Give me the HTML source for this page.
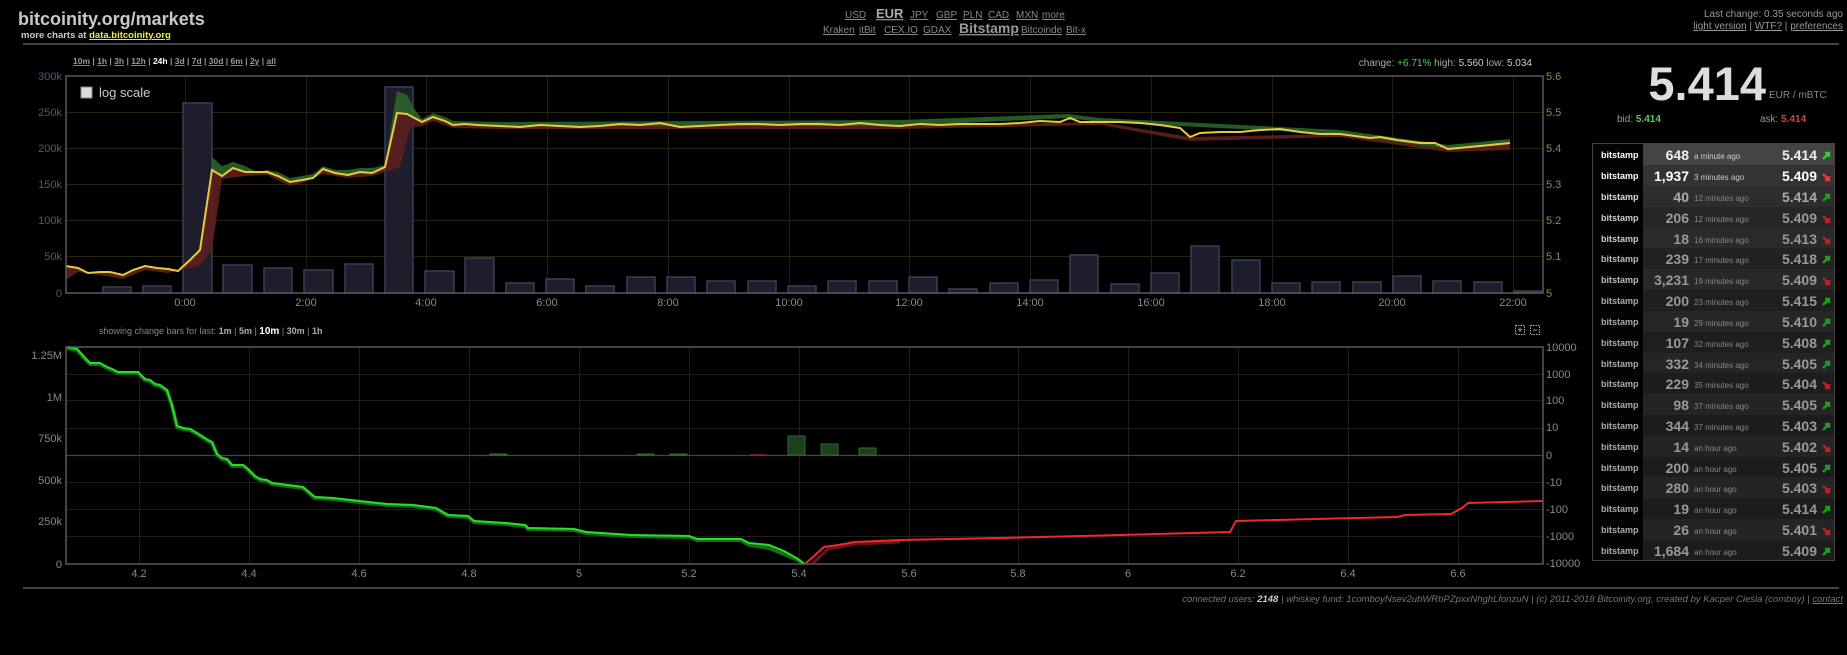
<!DOCTYPE html>
<html><head><meta charset="utf-8">
<style>
html,body{margin:0;padding:0;background:#000;width:1847px;height:655px;overflow:hidden;font-family:"Liberation Sans",Arial,sans-serif;}
svg{position:absolute;left:0;top:0}
a{color:#888}
.t{position:absolute;white-space:nowrap}
</style></head><body>
<svg width="1847" height="655" viewBox="0 0 1847 655" font-family="Liberation Sans, Arial, sans-serif">
<!-- header -->
<text x="18" y="25" font-size="18" font-weight="bold" fill="#c8c8c8">bitcoinity.org/markets</text>
<text x="21" y="38" font-size="9.5" font-weight="bold" fill="#ccc">more charts at <tspan fill="#ee4" text-decoration="underline">data.bitcoinity.org</tspan></text>
<g font-size="10" fill="#888" text-decoration="underline">
<text x="845" y="18">USD</text><text x="876" y="18" font-size="13" font-weight="bold" text-decoration="none" fill="#aaa">EUR</text>
<text x="910" y="18">JPY</text><text x="936" y="18">GBP</text><text x="963" y="18">PLN</text><text x="988" y="18">CAD</text><text x="1016" y="18">MXN</text><text x="1042" y="18">more</text>
<text x="823" y="33">Kraken</text><text x="859" y="33">itBit</text><text x="884" y="33">CEX.IO</text><text x="923" y="33">GDAX</text>
<text x="959" y="33" font-size="14" font-weight="bold" text-decoration="none" fill="#999">Bitstamp</text>
<text x="1021" y="33">Bitcoinde</text><text x="1066" y="33">Bit-x</text>
</g>
<text x="1843" y="17" font-size="10" fill="#999" text-anchor="end">Last change: 0.35 seconds ago</text>
<text x="1843" y="29" font-size="10" fill="#999" text-anchor="end"><tspan text-decoration="underline">light version</tspan> | <tspan text-decoration="underline">WTF?</tspan> | <tspan text-decoration="underline">preferences</tspan></text>
<rect x="23" y="43" width="1816" height="2" fill="#444"/>
<!-- timeframe -->
<text x="73" y="64" font-size="8.5" font-weight="bold" fill="#999"><tspan text-decoration="underline">10m</tspan> | <tspan text-decoration="underline">1h</tspan> | <tspan text-decoration="underline">3h</tspan> | <tspan text-decoration="underline">12h</tspan> | <tspan fill="#fff">24h</tspan> | <tspan text-decoration="underline">3d</tspan> | <tspan text-decoration="underline">7d</tspan> | <tspan text-decoration="underline">30d</tspan> | <tspan text-decoration="underline">6m</tspan> | <tspan text-decoration="underline">2y</tspan> | <tspan text-decoration="underline">all</tspan></text>
<text x="1532" y="66" font-size="10" fill="#aaa" text-anchor="end">change: <tspan fill="#5c5">+6.71%</tspan>      high: <tspan fill="#ccc">5.560</tspan>      low: <tspan fill="#ccc">5.034</tspan></text>

<!-- top chart grid -->
<g stroke="#26260e" stroke-width="1">
<line x1="66" y1="112.5" x2="1543" y2="112.5"/><line x1="66" y1="148.5" x2="1543" y2="148.5"/><line x1="66" y1="184.5" x2="1543" y2="184.5"/><line x1="66" y1="220.5" x2="1543" y2="220.5"/><line x1="66" y1="256.5" x2="1543" y2="256.5"/>
</g>
<g stroke="#1e1e1e">
<line x1="185.5" y1="76" x2="185.5" y2="293"/><line x1="306.5" y1="76" x2="306.5" y2="293"/><line x1="426.5" y1="76" x2="426.5" y2="293"/><line x1="547.5" y1="76" x2="547.5" y2="293"/><line x1="668.5" y1="76" x2="668.5" y2="293"/><line x1="789.5" y1="76" x2="789.5" y2="293"/><line x1="909.5" y1="76" x2="909.5" y2="293"/><line x1="1030.5" y1="76" x2="1030.5" y2="293"/><line x1="1151.5" y1="76" x2="1151.5" y2="293"/><line x1="1272.5" y1="76" x2="1272.5" y2="293"/><line x1="1392.5" y1="76" x2="1392.5" y2="293"/><line x1="1513.5" y1="76" x2="1513.5" y2="293"/>
</g>
<!-- volume bars -->
<g fill="#1d1d2b" stroke="#3c3c58" stroke-width="1.5">
<rect x="103" y="287" width="28" height="6"/><rect x="143" y="286" width="28" height="7"/><rect x="183" y="103" width="29" height="190"/><rect x="223" y="265" width="29" height="28"/><rect x="264" y="268" width="28" height="25"/><rect x="304" y="270" width="29" height="23"/><rect x="345" y="264" width="28" height="29"/><rect x="385" y="87" width="28" height="206"/><rect x="425" y="271" width="29" height="22"/><rect x="465" y="258" width="29" height="35"/>
<rect x="506" y="283" width="28" height="10"/><rect x="546" y="279" width="28" height="14"/><rect x="586" y="286" width="28" height="7"/><rect x="627" y="277" width="28" height="16"/><rect x="667" y="277" width="28" height="16"/><rect x="707" y="281" width="28" height="12"/><rect x="748" y="281" width="28" height="12"/><rect x="788" y="286" width="28" height="7"/><rect x="828" y="281" width="28" height="12"/><rect x="869" y="281" width="28" height="12"/><rect x="909" y="277" width="28" height="16"/><rect x="949" y="289" width="28" height="4"/><rect x="990" y="283" width="28" height="10"/><rect x="1030" y="280" width="28" height="13"/><rect x="1070" y="255" width="28" height="38"/><rect x="1111" y="284" width="28" height="9"/><rect x="1151" y="273" width="28" height="20"/><rect x="1191" y="246" width="28" height="47"/><rect x="1232" y="260" width="28" height="33"/><rect x="1272" y="283" width="28" height="10"/><rect x="1312" y="282" width="28" height="11"/><rect x="1353" y="282" width="28" height="11"/><rect x="1393" y="276" width="28" height="17"/><rect x="1433" y="281" width="28" height="12"/><rect x="1474" y="282" width="28" height="11"/><rect x="1514" y="291" width="28" height="2"/>
</g>
<!-- bands -->
<polygon fill="#2c6a2c" opacity="0.85" points="212,157 222,166 233,162 245,166 257,172 267,170 278,172 290,178 302,176 313,174 323,166 335,170 348,170 360,168 372,168 385,165 397,91 407,95 415,110 422,119 433,113 445,117 453,121 500,122 700,121 900,120 1068,114 1100,118 1340,130 1448,145 1510,139 1510,143 1448,149 1340,134 1100,122 1068,118 900,126 700,126 500,126 453,125 445,121 433,117 422,122 407,114 397,113 385,167 372,173 360,172 348,175 335,173 323,169 313,178 302,180 290,182 278,176 267,172 257,172 245,172 233,168 222,176 212,170"/>
<polygon fill="#5e1f1f" opacity="0.9" points="66,266 78,268 88,273 100,272 110,272 123,275 133,270 145,266 157,268 168,269 178,271 190,260 200,250 212,170 222,176 233,168 245,172 257,172 267,172 278,176 290,182 302,180 313,178 323,169 335,173 348,175 360,172 372,173 385,167 397,113 407,114 422,122 433,117 445,121 453,125 500,126 700,126 900,126 1100,122 1190,137 1340,134 1448,149 1510,143 1510,150 1448,152 1340,137 1190,141 1100,125 900,129 700,129 500,129 453,128 433,121 422,126 410,128 400,167 385,172 372,176 348,178 323,174 302,183 290,186 267,175 245,176 222,179 212,250 200,265 190,268 168,273 145,270 123,279 100,275 78,272 66,280"/>
<polyline fill="none" stroke="#e6cc3c" stroke-width="2" points="66,266 78,268 88,273 100,272 110,272 123,275 133,270 145,266 157,268 168,269 178,271 190,260 200,250 212,170 222,176 233,168 245,172 257,172 267,172 278,176 290,182 302,180 313,178 323,169 335,173 348,175 360,172 372,173 385,167 397,113 407,114 422,122 433,117 445,121 453,125 465,124 477,125 500,126 520,127 540,125 560,126 580,127 600,126 620,124 640,125 660,123 680,127 700,126 720,125 740,124 760,124 780,125 800,124 820,124 840,125 860,123 880,125 900,126 920,124 940,125 960,124 980,124 1000,124 1020,123 1040,121 1060,122 1070,118 1080,122 1100,122 1120,122 1140,123 1160,125 1180,128 1190,137 1200,133 1220,132 1240,132 1260,130 1280,129 1300,132 1320,134 1340,134 1370,138 1380,137 1397,140 1420,143 1435,143 1448,149 1480,146 1510,143"/>
<!-- top frame -->
<rect x="66" y="76" width="1477" height="217" fill="none" stroke="#5a5a5a" stroke-width="1.5"/>
<rect x="81" y="87" width="11" height="11" fill="#ddd" stroke="#888"/>
<text x="99" y="97" font-size="13" fill="#ccc">log scale</text>
<g font-size="11" fill="#56566e" text-anchor="end">
<text x="62" y="80">300k</text><text x="62" y="116">250k</text><text x="62" y="152">200k</text><text x="62" y="188">150k</text><text x="62" y="224">100k</text><text x="62" y="260">50k</text><text x="62" y="297">0</text>
</g>
<g font-size="11" fill="#8a8a40">
<text x="1546" y="80">5.6</text><text x="1546" y="116">5.5</text><text x="1546" y="152">5.4</text><text x="1546" y="188">5.3</text><text x="1546" y="224">5.2</text><text x="1546" y="260">5.1</text><text x="1546" y="297">5</text>
</g>
<g font-size="11" fill="#888" text-anchor="middle">
<text x="185" y="306">0:00</text><text x="306" y="306">2:00</text><text x="426" y="306">4:00</text><text x="547" y="306">6:00</text><text x="668" y="306">8:00</text><text x="789" y="306">10:00</text><text x="909" y="306">12:00</text><text x="1030" y="306">14:00</text><text x="1151" y="306">16:00</text><text x="1272" y="306">18:00</text><text x="1392" y="306">20:00</text><text x="1513" y="306">22:00</text>
</g>
<!-- bottom chart -->
<text x="99" y="334" font-size="9" fill="#888">showing change bars for last: <tspan font-weight="bold" fill="#aaa">1m</tspan> | <tspan font-weight="bold" fill="#aaa">5m</tspan> | <tspan font-weight="bold" fill="#fff" font-size="10">10m</tspan> | <tspan font-weight="bold" fill="#aaa">30m</tspan> | <tspan font-weight="bold" fill="#aaa">1h</tspan></text>
<rect x="1515.5" y="325.5" width="9" height="9" fill="none" stroke="#aaa" stroke-dasharray="1.5 1"/><text x="1520" y="333" font-size="9" fill="#ddd" text-anchor="middle">+</text>
<rect x="1530.5" y="325.5" width="9" height="9" fill="none" stroke="#aaa" stroke-dasharray="1.5 1"/><text x="1535" y="333" font-size="9" fill="#ddd" text-anchor="middle">−</text>
<g stroke="#1e1e1e">
<line x1="66" y1="374.5" x2="1543" y2="374.5"/><line x1="66" y1="400.5" x2="1543" y2="400.5"/><line x1="66" y1="428.5" x2="1543" y2="428.5"/><line x1="66" y1="482.5" x2="1543" y2="482.5"/><line x1="66" y1="509.5" x2="1543" y2="509.5"/><line x1="66" y1="536.5" x2="1543" y2="536.5"/>
<line x1="139.5" y1="347" x2="139.5" y2="564"/><line x1="249.5" y1="347" x2="249.5" y2="564"/><line x1="359.5" y1="347" x2="359.5" y2="564"/><line x1="469.5" y1="347" x2="469.5" y2="564"/><line x1="579.5" y1="347" x2="579.5" y2="564"/><line x1="689.5" y1="347" x2="689.5" y2="564"/><line x1="799.5" y1="347" x2="799.5" y2="564"/><line x1="909.5" y1="347" x2="909.5" y2="564"/><line x1="1018.5" y1="347" x2="1018.5" y2="564"/><line x1="1128.5" y1="347" x2="1128.5" y2="564"/><line x1="1238.5" y1="347" x2="1238.5" y2="564"/><line x1="1348.5" y1="347" x2="1348.5" y2="564"/><line x1="1458.5" y1="347" x2="1458.5" y2="564"/>
</g>
<line x1="66" y1="455.5" x2="1543" y2="455.5" stroke="#444" stroke-width="1.2"/>
<g fill="#1f3f1f" stroke="#2e6a2e">
<rect x="788" y="436" width="17" height="19"/><rect x="821" y="444" width="17" height="11"/><rect x="859" y="448" width="17" height="7"/>
<rect x="490" y="454" width="17" height="1"/><rect x="637" y="454" width="17" height="1"/><rect x="670" y="454" width="17" height="1"/>
</g>
<rect x="750" y="454" width="17" height="1" fill="#6a2020"/>
<polyline fill="none" stroke="#1a6a1a" stroke-width="4" points="67,348 77,350 85,359 90,364 100,364 107,368 112,370 118,373 138,373 145,380 150,381 155,385 160,386 167,391 172,406 177,427 183,429 190,430 197,434 208,441 212,443 217,455 222,459 227,460 232,466 243,466 248,470 255,477 260,480 267,481 272,484 280,485 303,488 310,494 315,498 333,499 359,502 387,505 413,506 436,509 448,516 468,517 474,522 505,524 525,526 528,529 574,530 586,533 631,536 689,537 697,540 741,540 749,545 769,548 784,554 798,560 804,564"/>
<polyline fill="none" stroke="#2bdc2b" stroke-width="2" points="67,347 77,349 85,358 90,363 100,363 107,367 112,369 118,372 138,372 145,379 150,380 155,384 160,385 167,390 172,405 177,426 183,428 190,429 197,433 208,440 212,442 217,454 222,458 227,459 232,465 243,465 248,469 255,476 260,479 267,480 272,483 280,484 303,487 310,493 315,497 333,498 359,501 387,504 413,505 436,508 448,515 468,516 474,521 505,523 525,525 528,528 574,529 586,532 631,535 689,536 697,539 741,539 749,543 769,545 784,551 798,559 804,564"/>
<polyline fill="none" stroke="#6a1515" stroke-width="3" points="812,564 828,549 840,547 855,544 900,542"/>
<polyline fill="none" stroke="#ee2a2a" stroke-width="2" points="805,564 824,547 838,545 855,542 900,540 1000,538 1120,535 1230,532 1236,521 1397,517 1405,515 1451,514 1462,508 1468,503 1543,501"/>
<rect x="66" y="347" width="1477" height="217" fill="none" stroke="#5a5a5a" stroke-width="1.5"/>
<g font-size="11" fill="#888" text-anchor="end">
<text x="62" y="359">1.25M</text><text x="62" y="401">1M</text><text x="62" y="442">750k</text><text x="62" y="484">500k</text><text x="62" y="525">250k</text><text x="62" y="568">0</text>
</g>
<g font-size="11" fill="#888">
<text x="1546" y="351">10000</text><text x="1546" y="378">1000</text><text x="1546" y="404">100</text><text x="1546" y="431">10</text><text x="1546" y="459">0</text><text x="1546" y="486">-10</text><text x="1546" y="513">-100</text><text x="1546" y="540">-1000</text><text x="1546" y="567">-10000</text>
</g>
<g font-size="11" fill="#888" text-anchor="middle">
<text x="139" y="577">4.2</text><text x="249" y="577">4.4</text><text x="359" y="577">4.6</text><text x="469" y="577">4.8</text><text x="579" y="577">5</text><text x="689" y="577">5.2</text><text x="799" y="577">5.4</text><text x="909" y="577">5.6</text><text x="1018" y="577">5.8</text><text x="1128" y="577">6</text><text x="1238" y="577">6.2</text><text x="1348" y="577">6.4</text><text x="1458" y="577">6.6</text>
</g>
<rect x="23" y="587" width="1816" height="2" fill="#444"/>
<text x="1843" y="602" font-size="9.5" font-style="italic" fill="#777" text-anchor="end">connected users: <tspan fill="#ccc" font-weight="bold">2148</tspan> | whiskey fund: 1comboyNsev2ubWRbPZpxxNhghLfonzuN | (c) 2011-2018 Bitcoinity.org, created by Kacper Cieśla (comboy) | <tspan text-decoration="underline">contact</tspan></text>

<!-- price -->
<text x="1766" y="100" font-size="47" font-weight="bold" fill="#ddd" text-anchor="end">5.414</text>
<text x="1769" y="98" font-size="10" fill="#888">EUR / mBTC</text>
<text x="1617" y="122" font-size="10" fill="#999">bid: <tspan fill="#5c5" font-weight="bold">5.414</tspan></text>
<text x="1760" y="122" font-size="10" fill="#999">ask: <tspan fill="#c44" font-weight="bold">5.414</tspan></text>

<!-- table -->
<g id="tbl"></g>
<rect x="1592.5" y="143.5" width="242" height="417" fill="none" stroke="#444"/>
<g font-size="9" font-weight="bold" fill="#ddd">
<rect x="1593" y="144" width="50" height="416" fill="#030303"/>
</g>
<g>
<rect x="1643" y="144" width="191" height="21" fill="#444"/>
<rect x="1643" y="165" width="191" height="21" fill="#333"/>
<rect x="1643" y="186" width="191" height="21" fill="#2d2d2d"/>
<rect x="1643" y="207" width="191" height="21" fill="#262626"/>
<rect x="1643" y="228" width="191" height="21" fill="#2a2a2a"/>
<rect x="1643" y="248" width="191" height="21" fill="#222"/>
<rect x="1643" y="269" width="191" height="21" fill="#282828"/>
<rect x="1643" y="290" width="191" height="21" fill="#1f1f1f"/>
<rect x="1643" y="311" width="191" height="21" fill="#262626"/>
<rect x="1643" y="332" width="191" height="21" fill="#1e1e1e"/>
<rect x="1643" y="353" width="191" height="21" fill="#252525"/>
<rect x="1643" y="373" width="191" height="21" fill="#1d1d1d"/>
<rect x="1643" y="394" width="191" height="21" fill="#242424"/>
<rect x="1643" y="415" width="191" height="21" fill="#1c1c1c"/>
<rect x="1643" y="436" width="191" height="21" fill="#242424"/>
<rect x="1643" y="457" width="191" height="21" fill="#1c1c1c"/>
<rect x="1643" y="477" width="191" height="21" fill="#242424"/>
<rect x="1643" y="498" width="191" height="21" fill="#1c1c1c"/>
<rect x="1643" y="519" width="191" height="21" fill="#242424"/>
<rect x="1643" y="540" width="191" height="20" fill="#1c1c1c"/>
</g>
<g font-size="9" font-weight="bold" fill="#bbb">
<text x="1601" y="158" fill="#fff">bitstamp</text><text x="1601" y="179" fill="#fff">bitstamp</text><text x="1601" y="200" fill="#ddd">bitstamp</text><text x="1601" y="221" fill="#ccc">bitstamp</text><text x="1601" y="242" fill="#ccc">bitstamp</text><text x="1601" y="262">bitstamp</text><text x="1601" y="283">bitstamp</text><text x="1601" y="304" fill="#aaa">bitstamp</text><text x="1601" y="325" fill="#aaa">bitstamp</text><text x="1601" y="346" fill="#aaa">bitstamp</text><text x="1601" y="367" fill="#aaa">bitstamp</text><text x="1601" y="387" fill="#aaa">bitstamp</text><text x="1601" y="408" fill="#aaa">bitstamp</text><text x="1601" y="429" fill="#aaa">bitstamp</text><text x="1601" y="450" fill="#aaa">bitstamp</text><text x="1601" y="471" fill="#aaa">bitstamp</text><text x="1601" y="491" fill="#aaa">bitstamp</text><text x="1601" y="512" fill="#aaa">bitstamp</text><text x="1601" y="533" fill="#aaa">bitstamp</text><text x="1601" y="554" fill="#aaa">bitstamp</text>
</g>
<g font-size="14" font-weight="bold" text-anchor="end" fill="#999">
<text x="1689" y="160" fill="#eee">648</text><text x="1689" y="181" fill="#fff">1,937</text><text x="1689" y="202" fill="#aaa">40</text><text x="1689" y="223">206</text><text x="1689" y="244">18</text><text x="1689" y="264">239</text><text x="1689" y="285">3,231</text><text x="1689" y="306">200</text><text x="1689" y="327">19</text><text x="1689" y="348">107</text><text x="1689" y="369">332</text><text x="1689" y="389">229</text><text x="1689" y="410">98</text><text x="1689" y="431">344</text><text x="1689" y="452">14</text><text x="1689" y="473">200</text><text x="1689" y="493">280</text><text x="1689" y="514">19</text><text x="1689" y="535">26</text><text x="1689" y="556">1,684</text>
</g>
<g font-size="8" fill="#888">
<text x="1694" y="159" fill="#ccc">a minute ago</text><text x="1694" y="180" fill="#ccc">3 minutes ago</text><text x="1694" y="201">12 minutes ago</text><text x="1694" y="222">12 minutes ago</text><text x="1694" y="243">16 minutes ago</text><text x="1694" y="263">17 minutes ago</text><text x="1694" y="284">19 minutes ago</text><text x="1694" y="305">23 minutes ago</text><text x="1694" y="326">29 minutes ago</text><text x="1694" y="347">32 minutes ago</text><text x="1694" y="368">34 minutes ago</text><text x="1694" y="388">35 minutes ago</text><text x="1694" y="409">37 minutes ago</text><text x="1694" y="430">37 minutes ago</text><text x="1694" y="451">an hour ago</text><text x="1694" y="472">an hour ago</text><text x="1694" y="492">an hour ago</text><text x="1694" y="513">an hour ago</text><text x="1694" y="534">an hour ago</text><text x="1694" y="555">an hour ago</text>
</g>
<g font-size="14" font-weight="bold" text-anchor="end" fill="#999">
<text x="1817" y="160" fill="#eee">5.414</text><text x="1817" y="181" fill="#fff">5.409</text><text x="1817" y="202" fill="#aaa">5.414</text><text x="1817" y="223">5.409</text><text x="1817" y="244">5.413</text><text x="1817" y="264">5.418</text><text x="1817" y="285">5.409</text><text x="1817" y="306">5.415</text><text x="1817" y="327">5.410</text><text x="1817" y="348">5.408</text><text x="1817" y="369">5.405</text><text x="1817" y="389">5.404</text><text x="1817" y="410">5.405</text><text x="1817" y="431">5.403</text><text x="1817" y="452">5.402</text><text x="1817" y="473">5.405</text><text x="1817" y="493">5.403</text><text x="1817" y="514">5.414</text><text x="1817" y="535">5.401</text><text x="1817" y="556">5.409</text>
</g>
<g stroke-width="2.5" fill="none">
<path d="M1823 159 l6 -6 m-4 0 h4 v4" stroke="#3c3"/>
<path d="M1823 174 l6 6 m-4 0 h4 v-4" stroke="#e33"/>
<path d="M1823 201 l6 -6 m-4 0 h4 v4" stroke="#292"/>
<path d="M1823 216 l6 6 m-4 0 h4 v-4" stroke="#b22"/>
<path d="M1823 237 l6 6 m-4 0 h4 v-4" stroke="#b22"/>
<path d="M1823 263 l6 -6 m-4 0 h4 v4" stroke="#292"/>
<path d="M1823 278 l6 6 m-4 0 h4 v-4" stroke="#b22"/>
<path d="M1823 305 l6 -6 m-4 0 h4 v4" stroke="#292"/>
<path d="M1823 326 l6 -6 m-4 0 h4 v4" stroke="#292"/>
<path d="M1823 347 l6 -6 m-4 0 h4 v4" stroke="#292"/>
<path d="M1823 368 l6 -6 m-4 0 h4 v4" stroke="#292"/>
<path d="M1823 382 l6 6 m-4 0 h4 v-4" stroke="#b22"/>
<path d="M1823 409 l6 -6 m-4 0 h4 v4" stroke="#292"/>
<path d="M1823 430 l6 -6 m-4 0 h4 v4" stroke="#292"/>
<path d="M1823 445 l6 6 m-4 0 h4 v-4" stroke="#b22"/>
<path d="M1823 472 l6 -6 m-4 0 h4 v4" stroke="#292"/>
<path d="M1823 486 l6 6 m-4 0 h4 v-4" stroke="#b22"/>
<path d="M1823 513 l6 -6 m-4 0 h4 v4" stroke="#292"/>
<path d="M1823 528 l6 6 m-4 0 h4 v-4" stroke="#b22"/>
<path d="M1823 555 l6 -6 m-4 0 h4 v4" stroke="#292"/>
</g>
</svg>
</body></html>
